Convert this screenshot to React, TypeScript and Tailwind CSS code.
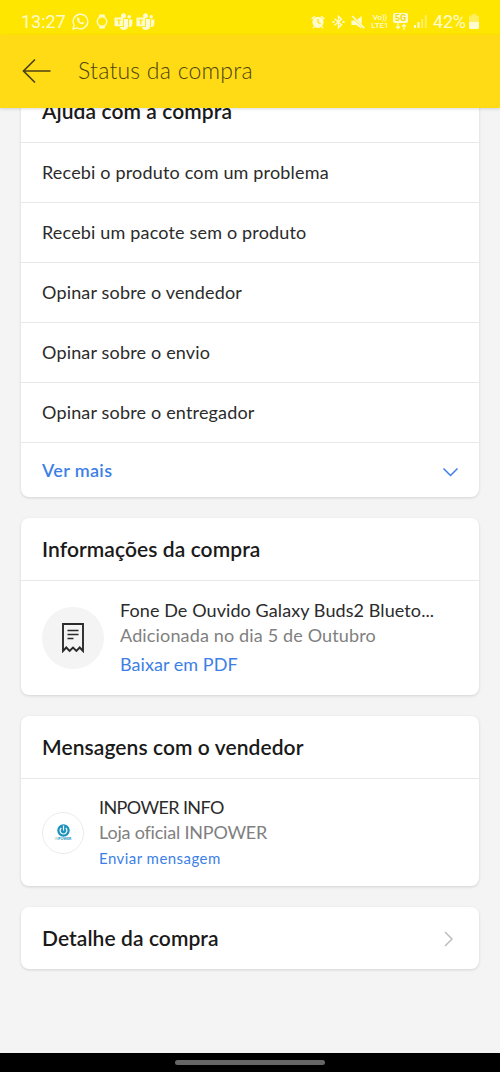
import type { ReactNode } from "react";
import { clsx } from "clsx";

const helpOptions = [
  "Recebi o produto com um problema",
  "Recebi um pacote sem o produto",
  "Opinar sobre o vendedor",
  "Opinar sobre o envio",
  "Opinar sobre o entregador",
];

function WhatsAppIcon() {
  return (
    <svg width="17" height="17" viewBox="0 0 17 17" fill="none" stroke="currentColor">
      <path d="M1 16l1.100-4A7.300 7.300 0 1 1 5 14.900z" strokeWidth="1.400" strokeLinejoin="round" />
      <path
        d="M5.700 4.500c-1.600 1.200-.6 3.400.9 5s3.800 2.600 5 1.200c.6-.8.300-1-.3-1.400-.9-.5-1.200-.5-1.700.2-.3.400-1.800-.7-2.400-1.800.8-.8.6-1 .1-2.200-.3-.8-.8-1.300-1.600-1z"
        fill="currentColor"
        stroke="none"
      />
    </svg>
  );
}

function WatchIcon() {
  return (
    <svg width="12" height="15" viewBox="0 0 12 15" fill="none" stroke="currentColor">
      <circle cx="6" cy="7.500" r="4.700" strokeWidth="1.500" />
      <path d="M2.500 3.600L3.500.5h5l1 3.100C7.500 2 4.500 2 2.500 3.600zM2.500 11.400l1 3.100h5l1-3.100c-2 1.600-5 1.600-7 0z" fill="currentColor" stroke="none" />
    </svg>
  );
}

function TeamsIcon() {
  return (
    <svg width="19" height="17" viewBox="0 0 19 17" fill="currentColor">
      <circle cx="9.500" cy="2.700" r="2.500" />
      <circle cx="15.200" cy="3.800" r="1.800" />
      <path d="M10 6h4v6.500a4.200 4.200 0 0 1-8.200 1.500H10z" />
      <path d="M14.900 6.400h3.400v4.800a2.900 2.900 0 0 1-3.900 2.700c.4-.7.500-1.200.5-2z" />
      <path fillRule="evenodd" d="M.5 4.500h8.700v8.800H.5zM2.500 6.400v1.200h1.700v4h1.300v-4h1.700V6.400z" />
    </svg>
  );
}

function AlarmIcon() {
  return (
    <svg width="14" height="14" viewBox="0 0 14 14" fill="currentColor">
      <path
        fillRule="evenodd"
        d="M7 1.700a5.600 5.600 0 1 0 0 11.200A5.600 5.600 0 0 0 7 1.700zM6.300 4h1.300v3l2.300 1.400-.6 1-3-1.800z"
      />
      <path d="M.2 3.400L3.400.7l1 1.100L1.200 4.500zM9.600 1.800l1-1.100 3.200 2.700-1 1.100zM1.500 12.500l1.500-1.500 1 1-1.500 1.500zM10 12l1-1 1.500 1.500-1 1z" />
    </svg>
  );
}

function BluetoothIcon() {
  return (
    <svg width="13" height="14" viewBox="0 0 13 14" fill="none" stroke="currentColor" strokeWidth="1.400">
      <path d="M2.500 3.700l7 6L6.500 12.700V1.300l3 3-7 6" />
      <path d="M.5 7h2M10.500 7h2" strokeWidth="1.800" />
    </svg>
  );
}

function MuteIcon() {
  return (
    <svg width="14" height="14" viewBox="0 0 14 14" fill="currentColor">
      <path d="M.5 5.500h3.200L10.500 12v1.500L5.200 10H.5zM6.300 4.800L10.700.8v8.300z" />
      <path d="M1.200 1L13.300 13.200" stroke="currentColor" strokeWidth="1.700" />
    </svg>
  );
}

function VolteIcon() {
  return (
    <span className="flex w-[18px] flex-col items-center text-[8px] leading-[8px] font-medium">
      <span className="tracking-[-0.200px]">Vo))</span>
      <span>LTE1</span>
    </span>
  );
}

function FiveGIcon() {
  return (
    <span className="flex w-[15px] flex-col items-center">
      <span className="flex h-[10px] w-[15px] items-center justify-center rounded-[2px] bg-[#fffbd0] text-[9px] leading-none font-bold text-[#f2d800]">
        5G
      </span>
      <svg width="12" height="7" viewBox="0 0 12 7" fill="none" stroke="currentColor" strokeWidth="1.200">
        <path d="M3 0v5.500M1 3.500l2 2 2-2M9 7V1.500M7 3.500l2-2 2 2" />
      </svg>
    </span>
  );
}

function SignalIcon() {
  return (
    <svg width="13" height="13" viewBox="0 0 13 13" fill="currentColor">
      <path d="M0 10h2v3H0zM3.500 7h2v6h-2z" />
      <path d="M7.200 4h2v9h-2zM10.800 0h2v13h-2z" opacity="0.45" />
    </svg>
  );
}

function BatteryIcon() {
  return (
    <svg width="10" height="15" viewBox="0 0 10 15" fill="currentColor">
      <path d="M3 0h4v1.500h1.500A1.500 1.500 0 0 1 10 3v5H0V3a1.500 1.500 0 0 1 1.500-1.500H3z" opacity="0.45" />
      <path d="M0 8h10v5.500A1.500 1.500 0 0 1 8.500 15h-7A1.500 1.500 0 0 1 0 13.500z" />
    </svg>
  );
}

function StatusBar() {
  return (
    <div className="flex h-[35px] shrink-0 items-center bg-[#ffe600] pt-2 pr-[21px] pl-[21px] font-[Roboto,sans-serif] text-[#fffbd0]">
      <span className="w-[51px] text-[18px] leading-none">13:27</span>
      <WhatsAppIcon />
      <span className="ml-[7px]">
        <WatchIcon />
      </span>
      <span className="ml-[6px] flex gap-[3px]">
        <TeamsIcon />
        <TeamsIcon />
      </span>
      <div className="ml-auto flex items-center">
        <AlarmIcon />
        <span className="ml-[7px]">
          <BluetoothIcon />
        </span>
        <span className="ml-[6px]">
          <MuteIcon />
        </span>
        <span className="ml-[6px]">
          <VolteIcon />
        </span>
        <span className="ml-[4px]">
          <FiveGIcon />
        </span>
        <span className="ml-[6px]">
          <SignalIcon />
        </span>
        <span className="ml-[6px] w-[35px] text-[18px] leading-none tracking-[-0.200px]">42%</span>
        <span className="ml-[1px]">
          <BatteryIcon />
        </span>
      </div>
    </div>
  );
}

function Header() {
  return (
    <header className="z-10 flex h-[73px] shrink-0 items-center bg-[#ffdb15] pb-[2px] pl-[22px] text-[#4d4210] shadow-[0_1px_3px_rgba(0,0,0,0.15)]">
      <svg width="29" height="26" viewBox="0 0 29 26" fill="none" stroke="currentColor" strokeWidth="1.700">
        <path d="M13 1.500L1.500 13 13 24.500M1.500 13H28.500" />
      </svg>
      <h1 className="ml-[27px] text-[23px] leading-none font-light tracking-[0.240px]">Status da compra</h1>
    </header>
  );
}

function Card({ children, className }: { children: ReactNode; className?: string }) {
  return (
    <section className={clsx("rounded-lg bg-white shadow-[0_1px_3px_rgba(0,0,0,0.14)]", className)}>
      {children}
    </section>
  );
}

function CardTitle({ children }: { children: ReactNode }) {
  return (
    <h2 className="flex h-[62px] items-center px-[21px] text-[21px] font-semibold tracking-[0.080px] text-[#1a1a1a]">
      {children}
    </h2>
  );
}

export default function App() {
  return (
    <div className="flex h-[1072px] w-[500px] flex-col overflow-hidden bg-[#f4f4f4] font-[Lato,sans-serif]">
      <StatusBar />
      <Header />

      <main className="flex flex-1 flex-col gap-[21px] overflow-hidden px-[21px]">
        {/* scrolled slightly under the header */}
        <Card className="-mt-7">
          <CardTitle>Ajuda com a compra</CardTitle>
          {helpOptions.map((option) => (
            <div
              key={option}
              className="flex h-[60px] items-center border-t border-[#e8e8e8] px-[21px] text-[18px] tracking-[0.170px] text-[#2b2b2b]"
            >
              {option}
            </div>
          ))}
          <div className="flex h-[55px] items-center justify-between border-t border-[#e8e8e8] px-[21px] text-[#3d7fe6]">
            <span className="text-[18px] font-semibold tracking-[0.350px]">Ver mais</span>
            <svg className="mt-1" width="16" height="10" viewBox="0 0 16 10" fill="none" stroke="currentColor" strokeWidth="1.500">
              <path d="M1.500 1.500L8.500 8.500l7-7" />
            </svg>
          </div>
        </Card>

        <Card>
          <CardTitle>Informações da compra</CardTitle>
          <div className="flex h-[115px] items-center border-t border-[#e8e8e8] px-[21px]">
            <div className="flex size-[62px] items-center justify-center rounded-full bg-[#f4f4f4]">
              <svg width="22" height="30" viewBox="0 0 22 30" fill="none" stroke="#2b2b2b" strokeWidth="1.900">
                <path d="M1 1h20v27l-3.300-3.500-3.300 3.500-3.400-3.500-3.400 3.500-3.300-3.500L1 28z" />
                <path d="M5.500 7.500h11M5.500 11.500h11M5.500 15.500h6" strokeWidth="1.600" />
              </svg>
            </div>
            <div className="ml-4 flex flex-col pb-[2px] text-[18px] leading-[25px]">
              <span className="tracking-[0.090px] text-[#2b2b2b]">Fone De Ouvido Galaxy Buds2 Blueto...</span>
              <span className="tracking-[0.150px] text-[#808080]">Adicionada no dia 5 de Outubro</span>
              <span className="mt-1 tracking-[0.050px] text-[#3d7fe6]">Baixar em PDF</span>
            </div>
          </div>
        </Card>

        <Card>
          <CardTitle>Mensagens com o vendedor</CardTitle>
          <div className="flex h-[108px] items-center border-t border-[#e8e8e8] px-[21px]">
            <div className="flex size-[42px] flex-col items-center justify-center rounded-full border border-[#ececec] pt-px">
              <svg width="13" height="13" viewBox="0 0 13 13">
                <circle cx="6.500" cy="6.500" r="6.200" fill="#1c93bd" />
                <path d="M4.300 4a3.400 3.400 0 1 0 4.400 0M6.500 1.500v5" fill="none" stroke="#fff" strokeWidth="1.200" />
              </svg>
              <span className="text-[3.500px] leading-[5px] font-black text-[#1c93bd]">
                <span className="font-normal text-[#6cc5b0]">IN</span>POWER
              </span>
            </div>
            <div className="ml-[15px] flex flex-col pt-px text-[18px] leading-[25px]">
              <span className="tracking-[-0.600px] text-[#2b2b2b]">INPOWER INFO</span>
              <span className="tracking-[-0.200px] text-[#808080]">Loja oficial INPOWER</span>
              <span className="pt-px text-[15px] tracking-[0.450px] text-[#3d7fe6]">Enviar mensagem</span>
            </div>
          </div>
        </Card>

        <Card className="flex items-center justify-between pr-[26px]">
          <CardTitle>Detalhe da compra</CardTitle>
          <svg className="mt-px" width="9" height="16" viewBox="0 0 9 16" fill="none" stroke="#bdbdbd" strokeWidth="1.500">
            <path d="M1 1l7 7-7 7" />
          </svg>
        </Card>
      </main>

      <div className="flex h-[19px] shrink-0 justify-center bg-black pt-[7px]">
        <div className="h-[5px] w-[150px] rounded-full bg-[#666666]" />
      </div>
    </div>
  );
}
